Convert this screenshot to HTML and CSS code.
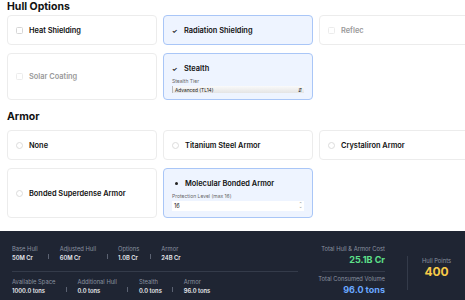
FILE: index.html
```html
<!DOCTYPE html>
<html lang="en">
<head>
    <meta charset="UTF-8">
    <meta name="viewport" content="width=device-width, initial-scale=1.0">
    <title>Hull &amp; Armor</title>
    <link rel="stylesheet" href="styles.css">
</head>
<body>
    <div class="page">
        <h2 class="section-title">Hull Options</h2>
        <div class="grid">
            <label class="card">
                <span class="row"><span class="box"></span><span class="name">Heat Shielding</span></span>
            </label>
            <label class="card selected">
                <span class="row"><span class="check">&#10003;</span><span class="name">Radiation Shielding</span></span>
            </label>
            <label class="card disabled">
                <span class="row"><span class="box"></span><span class="name">Reflec</span></span>
            </label>

            <label class="card disabled">
                <span class="row"><span class="box"></span><span class="name">Solar Coating</span></span>
            </label>
            <div class="card selected tall">
                <span class="row"><span class="check">&#10003;</span><span class="name">Stealth</span></span>
                <span class="field-label">Stealth Tier</span>
                <div class="select">Advanced (TL14)<span class="arrows">&#8693;</span></div>
            </div>
        </div>

        <h2 class="section-title armor-title">Armor</h2>
        <div class="grid">
            <label class="card">
                <span class="row"><span class="radio"></span><span class="name">None</span></span>
            </label>
            <label class="card">
                <span class="row"><span class="radio"></span><span class="name">Titanium Steel Armor</span></span>
            </label>
            <label class="card">
                <span class="row"><span class="radio"></span><span class="name">Crystaliron Armor</span></span>
            </label>

            <label class="card">
                <span class="row"><span class="radio"></span><span class="name">Bonded Superdense Armor</span></span>
            </label>
            <div class="card selected tall">
                <span class="row"><span class="radio on"></span><span class="name">Molecular Bonded Armor</span></span>
                <span class="field-label">Protection Level (max 16)</span>
                <div class="number">16<span class="spin">&#8963;<br>&#8964;</span></div>
            </div>
        </div>
    </div>

    <div class="summary">
        <div class="stats">
            <div class="stat-row">
                <div class="stat"><span class="stat-label">Base Hull</span><span class="stat-value">50M Cr</span></div>
                <span class="bar"></span>
                <div class="stat"><span class="stat-label">Adjusted Hull</span><span class="stat-value">60M Cr</span></div>
                <span class="bar"></span>
                <div class="stat"><span class="stat-label">Options</span><span class="stat-value">1.0B Cr</span></div>
                <span class="bar"></span>
                <div class="stat"><span class="stat-label">Armor</span><span class="stat-value">24B Cr</span></div>
            </div>
            <div class="stat-row second">
                <div class="stat"><span class="stat-label">Available Space</span><span class="stat-value">1000.0 tons</span></div>
                <span class="bar"></span>
                <div class="stat"><span class="stat-label">Additional Hull</span><span class="stat-value">0.0 tons</span></div>
                <span class="bar"></span>
                <div class="stat"><span class="stat-label">Stealth</span><span class="stat-value">0.0 tons</span></div>
                <span class="bar"></span>
                <div class="stat"><span class="stat-label">Armor</span><span class="stat-value">96.0 tons</span></div>
            </div>
        </div>
        <div class="totals">
            <div class="total">
                <span class="stat-label">Total Hull &amp; Armor Cost</span>
                <span class="big green">25.1B Cr</span>
            </div>
            <div class="total last">
                <span class="stat-label">Total Consumed Volume</span>
                <span class="big blue">96.0 tons</span>
            </div>
        </div>
        <div class="vline"></div>
        <div class="hull-points">
            <span class="stat-label">Hull Points</span>
            <span class="hp">400</span>
        </div>
    </div>
</body>
</html>
```

FILE: styles.css
```css
body {
    margin: 0;
    overflow: hidden;
    font-family: Inter, "Liberation Sans", sans-serif;
    color: #111;
    background: #fff;
}
.page {
    padding: 0 7px;
    width: 470px;
}
.section-title {
    margin: 1px 0 2px;
    font-size: 10.5px;
    line-height: 12px;
    font-weight: 700;
}
.armor-title {
    margin-top: 11px;
    margin-bottom: 7px;
}
.grid {
    display: grid;
    grid-template-columns: 150px 150px 150px;
    column-gap: 6px;
    row-gap: 8px;
}
.card {
    display: flex;
    flex-direction: column;
    justify-content: center;
    min-height: 30px;
    box-sizing: border-box;
    padding: 0 8px;
    border: 1px solid #ececec;
    border-radius: 4px;
    background: #fff;
}
.card.tall {
    justify-content: flex-start;
    padding-top: 9px;
    padding-bottom: 6px;
}
.card.selected {
    background: #eef4ff;
    border-color: #a9c6f7;
}
.row {
    display: flex;
    align-items: center;
    height: 10px;
}
.name {
    font-size: 7.4px;
    font-weight: 600;
}
.disabled .name {
    color: #9a9a9a;
}
.box {
    width: 5px;
    height: 5px;
    border: 1px solid #d6d6d6;
    border-radius: 1.5px;
    margin-right: 6px;
}
.disabled .box {
    border-color: #ececec;
}
.check {
    width: 7px;
    margin-right: 5px;
    font-size: 6px;
    font-weight: 700;
}
.radio {
    width: 5px;
    height: 5px;
    border: 1px solid #dcdcdc;
    border-radius: 50%;
    margin-right: 6px;
}
.radio.on {
    border-color: transparent;
    position: relative;
}
.radio.on::after {
    content: "";
    position: absolute;
    left: 1.5px;
    top: 1.5px;
    width: 3px;
    height: 3px;
    border-radius: 50%;
    background: #222;
}
.field-label {
    margin-top: 5px;
    font-size: 5px;
    line-height: 6px;
    color: #666;
}
.select {
    display: flex;
    justify-content: space-between;
    align-items: center;
    height: 7px;
    margin-top: 2px;
    padding: 0 2px;
    font-size: 4.8px;
    border-left: 1px solid #bbb;
    background: linear-gradient(#fafafa, #e4e4e4);
}
.arrows {
    font-size: 5px;
}
.number {
    display: flex;
    justify-content: space-between;
    align-items: center;
    height: 10px;
    margin-top: 2px;
    padding: 0 2px;
    font-size: 5.5px;
    background: #fff;
}
.spin {
    font-size: 3.5px;
    line-height: 3px;
    color: #777;
    text-align: center;
}
.summary {
    display: flex;
    margin-top: 13px;
    height: 80px;
    padding: 14px 12px 0;
    background: #1f2533;
    box-sizing: border-box;
}
.stats {
    width: 286px;
}
.stat-row {
    display: flex;
    align-items: center;
    padding-bottom: 9px;
    border-bottom: 1px solid #343b4a;
}
.stat-row.second {
    border-bottom: none;
    padding-top: 6px;
}
.stat {
    display: flex;
    flex-direction: column;
}
.stat-label {
    font-size: 5.8px;
    line-height: 8px;
    color: #8a92a0;
}
.stat-value {
    font-size: 5.8px;
    line-height: 9px;
    font-weight: 600;
    color: #e8eaee;
}
.bar {
    width: 1px;
    height: 5px;
    margin: 6px 10.5px 0;
    background: #5b6272;
}
.totals {
    display: flex;
    flex-direction: column;
    align-items: flex-end;
    width: 63px;
    margin-left: 24px;
}
.total {
    display: flex;
    flex-direction: column;
    align-items: flex-end;
    width: 100%;
    padding-bottom: 5px;
    border-bottom: 1px solid #343b4a;
}
.total.last {
    border-bottom: none;
    padding-top: 3px;
}
.total .stat-label {
    white-space: nowrap;
}
.big {
    font-size: 9px;
    line-height: 13px;
    font-weight: 700;
}
.green {
    color: #5ee08a;
}
.blue {
    color: #6aa8ff;
}
.vline {
    width: 1px;
    height: 34px;
    margin: 11px 0 0 22px;
    background: #343b4a;
}
.hull-points {
    display: flex;
    flex-direction: column;
    align-items: center;
    margin: 12px 0 0 14px;
}
.hp {
    font-size: 12px;
    line-height: 14px;
    font-weight: 700;
    color: #f7c948;
}
```
